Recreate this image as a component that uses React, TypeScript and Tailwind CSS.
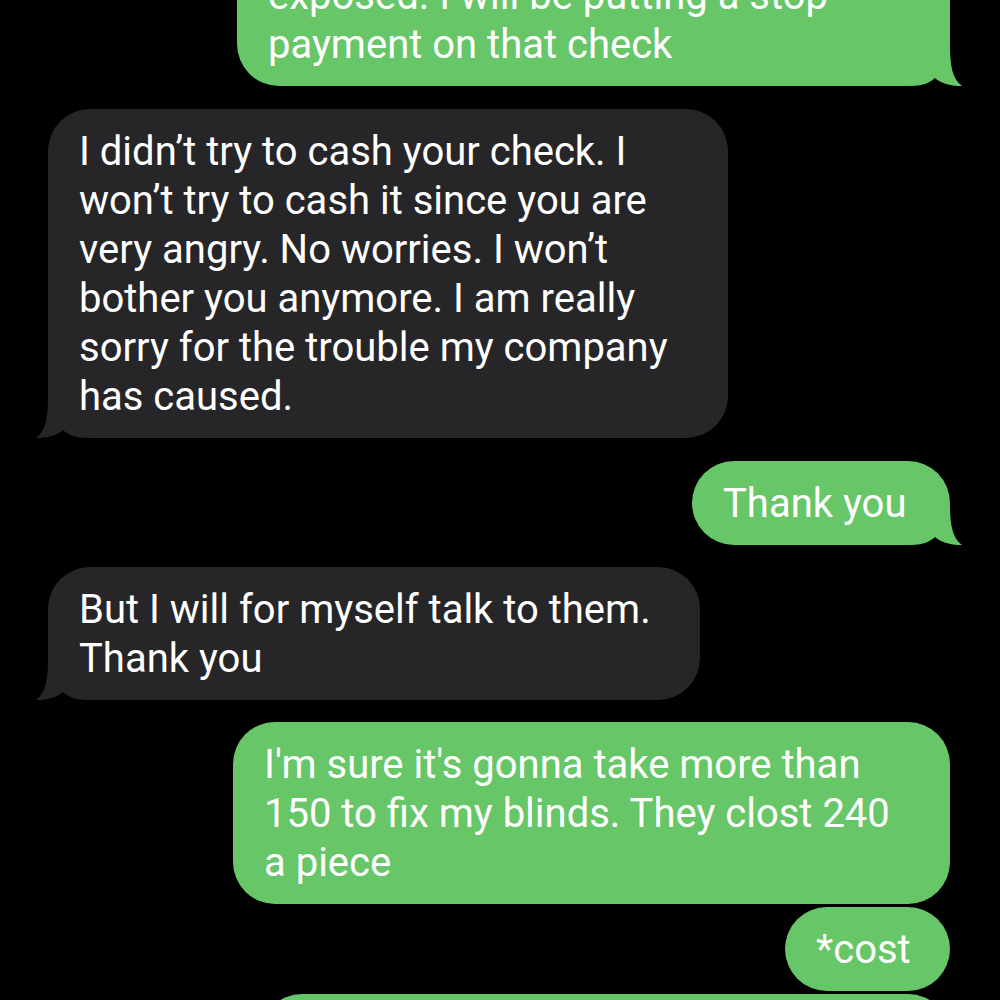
import React from 'react';

type Msg = {
  from: 'me' | 'them';
  lines: string[];
  width: string;
  tail?: boolean;
  gap: string;
};

const messages: Msg[] = [
  {
    from: 'me',
    lines: ['exposed. I will be putting a stop', 'payment on that check'],
    width: 'w-[713px]',
    tail: true,
    gap: 'mt-[-47px]',
  },
  {
    from: 'them',
    lines: [
      'I didn’t try to cash your check. I',
      'won’t try to cash it since you are',
      'very angry. No worries. I won’t',
      'bother you anymore. I am really',
      'sorry for the trouble my company',
      'has caused.',
    ],
    width: 'w-[680px]',
    tail: true,
    gap: 'mt-[23px]',
  },
  { from: 'me', lines: ['Thank you'], width: 'w-[258px]', tail: true, gap: 'mt-[23px]' },
  {
    from: 'them',
    lines: ['But I will for myself talk to them.', 'Thank you'],
    width: 'w-[652px]',
    tail: true,
    gap: 'mt-[22px]',
  },
  {
    from: 'me',
    lines: ["I'm sure it's gonna take more than", '150 to fix my blinds. They clost 240', 'a piece'],
    width: 'w-[717px]',
    gap: 'mt-[22px]',
  },
  { from: 'me', lines: ['*cost'], width: 'w-[165px]', gap: 'mt-[3px]' },
  { from: 'me', lines: ['Ok'], width: 'w-[690px]', gap: 'mt-[3px]' },
];

// bubble tail, sits under the text
const Tail = ({ side, color }: { side: 'me' | 'them'; color: string }) => (
  <svg
    width="52"
    height="40"
    viewBox="0 0 52 40"
    className={`absolute bottom-0 ${side === 'me' ? 'right-[-12px]' : 'left-[-12px] -scale-x-100'}`}
  >
    <path
      d="M0 0 H40 C40 18 42 33 52 40 C44 40.5 31 38 25 32 C20 37 12 40 0 40 Z"
      fill={color}
    />
  </svg>
);

export default function App() {
  return (
    <div
      className="w-[1000px] h-[1000px] overflow-hidden bg-black"
      style={{ fontFamily: 'Roboto, "Liberation Sans", sans-serif' }}
    >
      <div className="flex flex-col">
        {messages.map((m, i) => {
          const me = m.from === 'me';
          return (
            <div
              key={i}
              className={`relative ${m.gap} ${m.width} rounded-[42px] py-[17.5px] px-[31px] text-white text-[40px] leading-[49px] ${
                me ? 'self-end mr-[50px] bg-[#66c668]' : 'self-start ml-[48px] bg-[#262628]'
              }`}
            >
              {m.tail && <Tail side={m.from} color={me ? '#66c668' : '#262628'} />}
              <div className="relative">
                {m.lines.map((l, j) => (
                  <div key={j} className="whitespace-nowrap">
                    {l}
                  </div>
                ))}
              </div>
            </div>
          );
        })}
      </div>
    </div>
  );
}
